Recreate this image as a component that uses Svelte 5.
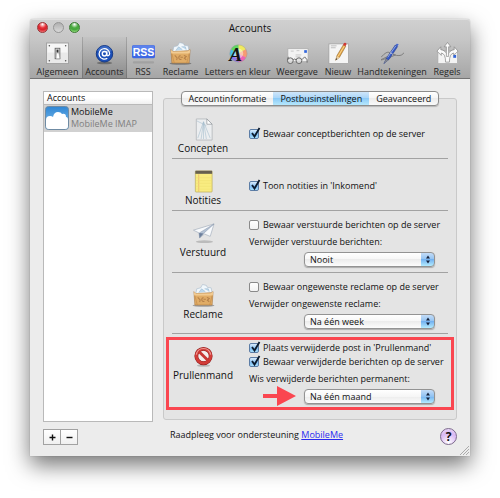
<script>
  const tools = [
    { id: 'general', label: 'Algemeen' },
    { id: 'accounts', label: 'Accounts' },
    { id: 'rss', label: 'RSS' },
    { id: 'junk', label: 'Reclame' },
    { id: 'fonts', label: 'Letters en kleur' },
    { id: 'view', label: 'Weergave' },
    { id: 'compose', label: 'Nieuw' },
    { id: 'signatures', label: 'Handtekeningen' },
    { id: 'rules', label: 'Regels' }
  ]

  const tabs = ['Accountinformatie', 'Postbusinstellingen', 'Geavanceerd']

  const periods = ['Nooit', 'Na één dag', 'Na één week', 'Na één maand']

  let sections = $state([
    {
      id: 'drafts',
      title: 'Concepten',
      checks: [{ text: 'Bewaar conceptberichten op de server', on: true }]
    },
    {
      id: 'notes',
      title: 'Notities',
      checks: [{ text: "Toon notities in 'Inkomend'", on: true }]
    },
    {
      id: 'sent',
      title: 'Verstuurd',
      checks: [{ text: 'Bewaar verstuurde berichten op de server', on: false }],
      erase: 'Verwijder verstuurde berichten:',
      period: 'Nooit'
    },
    {
      id: 'junk',
      title: 'Reclame',
      checks: [{ text: 'Bewaar ongewenste reclame op de server', on: false }],
      erase: 'Verwijder ongewenste reclame:',
      period: 'Na één week'
    },
    {
      id: 'trash',
      title: 'Prullenmand',
      checks: [
        { text: "Plaats verwijderde post in 'Prullenmand'", on: true },
        { text: 'Bewaar verwijderde berichten op de server', on: true }
      ],
      erase: 'Wis verwijderde berichten permanent:',
      period: 'Na één maand',
      marked: true
    }
  ])

  let tool = $state('accounts')
  let tab = $state('Postbusinstellingen')
</script>

{#snippet bag()}
  <svg class="icon" viewBox="0 0 24 24">
    <ellipse cx="12" cy="22.500" rx="11.500" ry="1.200" fill="#000" opacity=".3" />
    <path d="M4 10L5 5l4-1 2-3.500 4 1 1 2 4 .5 1 6z" fill="#f1f7fb" stroke="#a4b8c8" stroke-width=".6" />
    <path d="M7 9l3-4 4 3M13 5l4 0 1 3" fill="#bcd8ec" stroke="#8cacc6" stroke-width=".5" />
    <path d="M2 8l2 2 16-1 2-1-1 14H3z" fill="#e0ac66" stroke="#a8743a" stroke-width=".6" />
    <path d="M2 8l2 2h15l3-2-.3 4H2.300z" fill="#f2cb92" />
    <path d="M3 12l2.500 10M21 12l-2.500 10" stroke="#c48b4a" stroke-width=".7" />
    <path d="M6 14l2.500 2.500L8 19M12 14c-3 1-2 5 1 4M12 16h2.500M15.500 14l2.500 1-2 2 2 1.500" fill="none" stroke="#b58049" stroke-width="1.100" />
  </svg>
{/snippet}

{#snippet toolIcon(id)}
  {#if id === 'general'}
    <svg class="icon" viewBox="0 0 24 24">
      <rect x=".5" y="1" width="23" height="21.500" fill="#e9e9e9" stroke="#a2a2a2" />
      <rect x="1.500" y="2" width="21" height="9" fill="#f6f6f6" />
      <g fill="#555"><circle cx="3.500" cy="4" r=".8" /><circle cx="20.500" cy="4" r=".8" /><circle cx="3.500" cy="19.500" r=".8" /><circle cx="20.500" cy="19.500" r=".8" /></g>
      <rect x="9.500" y="6.500" width="5" height="11" fill="#ddd" stroke="#555" stroke-width=".8" />
      <path d="M11 8h2v3h-2z" fill="#333" />
      <path d="M11 11.500h2.500l1 6h-4z" fill="#fff" stroke="#888" stroke-width=".5" />
    </svg>
  {:else if id === 'accounts'}
    <svg class="icon" viewBox="0 0 24 24">
      <ellipse cx="12" cy="21.800" rx="8" ry="1.500" fill="#000" opacity=".3" />
      <circle cx="12" cy="12.300" r="8.600" fill="#1b4fb8" stroke="#123684" />
      <path d="M4.500 9.300a8 8 0 0 1 15 0q-7 4-15 0z" fill="#6f97dc" opacity=".4" />
      <circle cx="12" cy="12.300" r="2.300" fill="none" stroke="#fff" stroke-width="1.500" />
      <path d="M14.400 9.600v3.500c0 2 3 1.600 3-1a5.500 5.500 0 1 0-2.500 4.900" fill="none" stroke="#fff" stroke-width="1.300" />
    </svg>
  {:else if id === 'rss'}
    <svg class="icon" viewBox="0 0 24 24">
      <rect x="1" y="20" width="22" height="2.500" rx="1" fill="#777" opacity=".3" />
      <rect x="0" y="3.500" width="24" height="13.500" rx="1.500" fill="#3d67e4" />
      <rect x=".5" y="4" width="23" height="6" rx="1" fill="#5b82ee" />
      <text x="12" y="14.500" text-anchor="middle" class="rss">RSS</text>
    </svg>
  {:else if id === 'junk'}
    {@render bag()}
  {:else if id === 'fonts'}
    <svg class="icon" viewBox="0 0 24 24">
      <path d="M13 12V3a9 9 0 0 1 7.800 4.500z" fill="#f0ea5e" />
      <path d="M13 12l7.800-4.500a9 9 0 0 1 0 9z" fill="#f79a72" />
      <path d="M13 12l7.800 4.500A9 9 0 0 1 13 21z" fill="#f062b4" />
      <path d="M13 12v9a9 9 0 0 1-7.800-4.500z" fill="#8a78ea" />
      <path d="M13 12l-7.800 4.500a9 9 0 0 1 0-9z" fill="#47bfe8" />
      <path d="M13 12L5.200 7.500A9 9 0 0 1 13 3z" fill="#5ed860" />
      <circle cx="13" cy="12" r="5" fill="#fff" opacity=".45" />
      <circle cx="13" cy="12" r="9" fill="none" stroke="#999" stroke-width=".5" />
      <text x="10" y="20" text-anchor="middle" class="letter">A</text>
    </svg>
  {:else if id === 'view'}
    <svg class="icon" viewBox="0 0 24 24">
      <rect x="2" y="7" width="21" height="13.500" fill="#f3f3f3" stroke="#aaa" stroke-width=".7" />
      <rect x="19" y="8.500" width="2.800" height="2.800" fill="#3266dc" />
      <path d="M5 9.500h3M11 9h3M10 13.500h6M10 15.500h5" stroke="#bbb" stroke-width=".8" />
      <circle cx="4.500" cy="19.500" r="3" fill="#ddd" fill-opacity=".8" stroke="#666" />
      <circle cx="13.500" cy="19.500" r="3" fill="#ddd" fill-opacity=".8" stroke="#666" />
      <path d="M7.500 18.500q1.500-1.500 3 0M1.500 18.500l1-3M16.500 18.500l3-3 2.500 3v3" fill="none" stroke="#666" />
    </svg>
  {:else if id === 'compose'}
    <svg class="icon" viewBox="0 0 24 24">
      <rect x="2" y="2" width="20.500" height="20.500" fill="#f5f5f5" stroke="#9a9a9a" stroke-width=".7" />
      <path d="M4 4h6M4 6h5" stroke="#bbb" />
      <path d="M9 19l1.500-5L17 3l2.500 1.500-6.500 11.500z" fill="#e6a340" stroke="#8c6428" stroke-width=".6" />
      <path d="M11.500 15l7-11.500" stroke="#f9d792" />
      <path d="M9 19l1.500-4.500 2.500 2z" fill="#e9cfa4" /><path d="M9 19l.6-2 1.200.8z" fill="#222" />
      <path d="M16.700 3.200L17.800 1q1.500-1 2.700 1l-1.300 2.500z" fill="#cf3a34" />
    </svg>
  {:else if id === 'signatures'}
    <svg class="icon" viewBox="0 0 24 24">
      <path d="M0 16q6-7 9-5t-6 6 3 0 8-4 2 1 8-3" fill="none" stroke="#777" stroke-width=".9" />
      <path d="M3 22.500l3-6L15 3l2.500 1.500L8.500 18z" fill="#3558c4" stroke="#223a8c" stroke-width=".6" />
      <path d="M7 16L15.500 4" stroke="#a9bdf0" stroke-width=".8" />
      <path d="M9.500 11l3 2M15 3l1.500-2 2.500 1.500-1.500 2" fill="#4868c8" stroke="#ccc" stroke-width=".8" />
      <path d="M3 22.500l2.500-5 2 1.500z" fill="#888" />
    </svg>
  {:else}
    <svg class="icon" viewBox="0 0 24 24">
      <rect x="2" y="9.500" width="20.500" height="13" fill="#f3f3f3" stroke="#a5a5a5" stroke-width=".7" />
      <rect x="18" y="13.500" width="3" height="3" fill="#3266dc" />
      <g fill="#fafafa" stroke="#808080" stroke-width=".7" stroke-linejoin="round">
        <path d="M10 21q0-9-4.500-9.500V14L1 9.500 5 5v3q5 .5 7 6 2-5.500 7-6V5l4 4.500-4.500 4.500v-2.500Q14 12 14 21z" />
        <path d="M10.800 15V5H8.500L12 .5 15.500 5h-2.300v10z" />
      </g>
    </svg>
  {/if}
{/snippet}

{#snippet sectionIcon(id)}
  {#if id === 'drafts'}
    <svg class="icon" viewBox="0 0 24 24">
      <path d="M4.500 1h11l5.500 5.500V23h-16.500z" fill="#eceef0" stroke="#b0b4b8" stroke-width=".8" />
      <path d="M12 4L6 21M12 4l-2.500 18M12 4v18M12 4l3 18M12 4l7 17M5 3l10 5" stroke="#a4bccd" stroke-width=".6" />
      <path d="M15.500 1v5.500h5.500z" fill="#fff" stroke="#8a9096" stroke-width=".7" />
    </svg>
  {:else if id === 'notes'}
    <svg class="icon" viewBox="0 0 24 24">
      <rect x="3.500" y="1" width="17.500" height="22" rx=".8" fill="#f9ec80" stroke="#b9aa58" stroke-width=".7" />
      <rect x="3.500" y=".8" width="17.500" height="3.200" fill="#67604f" />
      <path d="M7 4.500v18" stroke="#e8a870" stroke-width=".7" />
      <path d="M4 8h16M4 11h16M4 14h16M4 17h16M4 20h16" stroke="#efdf70" stroke-width=".5" />
    </svg>
  {:else if id === 'sent'}
    <svg class="icon" viewBox="0 0 24 24">
      <ellipse cx="13" cy="20.500" rx="9" ry="1.500" fill="#000" opacity=".18" />
      <path d="M1.500 8.500L23 2l-4 13-6-2.500-5 4-.5-5z" fill="#f8fafc" stroke="#a4aebb" stroke-width=".7" />
      <path d="M7.500 11.500L23 2 12 12l-4 4.500z" fill="#b4c2d4" stroke="#8594a8" stroke-width=".5" />
      <path d="M12 12l-4 4.500-.5-5z" fill="#6c7f9c" />
    </svg>
  {:else if id === 'junk'}
    {@render bag()}
  {:else}
    <svg class="icon" viewBox="0 0 24 24">
      <ellipse cx="12" cy="21.500" rx="7" ry="1.300" fill="#000" opacity=".2" />
      <circle cx="12" cy="11.500" r="7.500" fill="#f4eceb" stroke="#8e1d1d" stroke-width="4" />
      <circle cx="12" cy="11.500" r="7.500" fill="none" stroke="#d23c38" stroke-width="3" />
      <path d="M6.700 6.200l10.600 10.600" stroke="#c93532" stroke-width="3" />
      <path d="M4.500 10a7.600 7.600 0 0 1 15 0" fill="none" stroke="#f09a94" stroke-width="1.200" />
    </svg>
  {/if}
{/snippet}

<main>
  <div class="window">
    <header>
      <div class="titlebar">
        <div class="lights">
          <button class="light red" aria-label="Sluit"></button>
          <button class="light gray" aria-label="Minimaliseer"></button>
          <button class="light green" aria-label="Zoom"></button>
        </div>
        <h1>Accounts</h1>
      </div>
      <nav class="toolbar">
        {#each tools as t (t.id)}
          <button class="tool" class:selected={tool === t.id} onclick={() => (tool = t.id)}>
            {@render toolIcon(t.id)}
            <span>{t.label}</span>
          </button>
        {/each}
      </nav>
    </header>

    <div class="content">
      <aside>
        <div class="list">
          <h2>Accounts</h2>
          <button class="account">
            <svg class="cloud" viewBox="0 0 24 24">
              <defs>
                <linearGradient id="sky" x1="0" y1="0" x2="0" y2="1">
                  <stop offset="0" stop-color="#2f86d4" />
                  <stop offset="1" stop-color="#8cc6ee" />
                </linearGradient>
              </defs>
              <rect x=".5" y=".5" width="23" height="23" rx="3" fill="url(#sky)" stroke="#6f8ba3" />
              <path d="M1 14q0-4 4-4 2 0 3 1 1-5 5-5 3 0 4 2 4-1 4 3 2 0 2 3v6q0 3-3 3H4q-3 0-3-3z" fill="#fff" />
            </svg>
            <span class="names">
              <span>MobileMe</span>
              <span class="kind">MobileMe IMAP</span>
            </span>
          </button>
        </div>
        <div class="edit">
          <button aria-label="Voeg toe"><svg viewBox="0 0 7 7"><path d="M3.500 0.500v6M0.500 3.500h6" /></svg></button>
          <button aria-label="Verwijder"><svg viewBox="0 0 7 7"><path d="M0.500 3.500h6" /></svg></button>
        </div>
      </aside>

      <div class="settings">
        <div class="tabs">
          {#each tabs as name}
            <button class:active={tab === name} onclick={() => (tab = name)}>{name}</button>
          {/each}
        </div>
        <div class="panel">
          {#each sections as s (s.id)}
            <section class={s.id} class:marked={s.marked}>
              <div class="heading">
                {@render sectionIcon(s.id)}
                <h3>{s.title}</h3>
              </div>
              <div class="options" class:single={!s.erase}>
                <div class="checks">
                  {#each s.checks as check}
                    <label class="check">
                      <input type="checkbox" bind:checked={check.on} />
                      <svg class="tick" viewBox="0 0 12 12"><path d="M3 6l2.500 3.500L10.500 1" /></svg>
                      {check.text}
                    </label>
                  {/each}
                </div>
                {#if s.erase}
                  <label for="period-{s.id}">{s.erase}</label>
                  <div class="popup">
                    <select id="period-{s.id}" bind:value={s.period}>
                      {#each periods as p}
                        <option>{p}</option>
                      {/each}
                    </select>
                    <svg class="arrows" viewBox="0 0 14 15"><path d="M5 6.500L7 3.500l2 3zM5 8.500l2 3 2-3z" /></svg>
                  </div>
                {/if}
              </div>
              {#if s.marked}
                <svg class="pointer" viewBox="0 0 33 20"><path d="M0 8h14V0l19 10-19 10v-8H0z" /></svg>
              {/if}
            </section>
          {/each}
        </div>
        <footer>
          <p>Raadpleeg voor ondersteuning <a href="#mobileme">MobileMe</a></p>
          <button class="help">?</button>
        </footer>
      </div>
    </div>
    <svg class="grip" viewBox="0 0 9 9"><path d="M0 9l9-9M3 9l6-6M6 9l3-3" /></svg>
  </div>
</main>

<style>
  :global(body) {
    background: #fff;
  }

  main {
    padding: 19px 30px 42px;
    overflow: hidden;
    font: 9px/13px "Open Sans", "Noto Sans", sans-serif;
    color: #111;
  }

  h1, h2, h3, p {
    margin: 0;
    font-weight: 400;
  }

  button, select {
    margin: 0;
    padding: 0;
    border: 0;
    background: none;
    font: inherit;
    color: inherit;
  }

  svg {
    display: block;
  }

  .window {
    position: relative;
    border-radius: 3px 3px 0 0;
    background: #ececec;
    box-shadow: 0 0 1px rgba(0, 0, 0, .4), 0 9px 22px rgba(0, 0, 0, .55);
  }

  header {
    border-bottom: 1px solid #747474;
    border-radius: 3px 3px 0 0;
    background: linear-gradient(#d0d0d0, #c6c6c6 35%, #a6a6a6);
    box-shadow: inset 0 1px #e0e0e0;
  }

  .titlebar {
    position: relative;
    height: 18px;
  }

  .titlebar h1 {
    font-size: 10px;
    line-height: 18px;
    text-align: center;
  }

  .lights {
    position: absolute;
    top: 3px;
    left: 7px;
    display: flex;
    gap: 5px;
  }

  .light {
    width: 11px;
    height: 11px;
    border: 1px solid #959595;
    border-radius: 50%;
  }

  .red {
    border-color: #9a3436;
    background: radial-gradient(circle at 50% 15%, #fff, #e8323a 40%, #d6202a 60%, #ff9a98);
  }

  .gray {
    background: linear-gradient(#b0b0b0, #d8d8d8);
  }

  .green {
    border-color: #3c7a33;
    background: radial-gradient(circle at 50% 15%, #fff, #4cab40 40%, #45a83b 60%, #b8f59a);
  }

  .toolbar {
    display: grid;
    grid-template-columns: 49fr 45fr 32fr 43fr 71fr 48fr 34fr 74fr 36fr;
    padding: 0 5px 0 3px;
  }

  .tool {
    display: flex;
    flex-direction: column;
    align-items: center;
    min-width: 0;
    padding: 5px 0 0;
    color: #262626;
    white-space: nowrap;
  }

  .tool.selected {
    background: linear-gradient(rgba(0, 0, 0, .02), rgba(0, 0, 0, .16));
    box-shadow: inset 1px 0 rgba(0, 0, 0, .15), inset -1px 0 rgba(0, 0, 0, .15);
  }

  .icon {
    width: 23px;
    height: 23px;
  }

  .rss {
    font: bold 11px "Liberation Sans", sans-serif;
    fill: #fff;
  }

  .letter {
    font: italic bold 20px "Liberation Serif", serif;
    fill: #111;
  }

  .content {
    display: flex;
    gap: 10px;
    padding: 12px 13px 11px;
  }

  aside {
    display: flex;
    flex: 0 0 110px;
    flex-direction: column;
    gap: 7px;
  }

  .list {
    flex: 1;
    border: 1px solid #b9b9b9;
    background: #fff;
  }

  .list h2 {
    padding-left: 3px;
    border-bottom: 1px solid #b9b9b9;
    background: linear-gradient(#fff 50%, #f0f0f0);
    font-size: 9px;
    line-height: 12px;
  }

  .account {
    display: flex;
    gap: 2px;
    width: 100%;
    padding: 1px 1px 2px;
    background: #d1d1d1;
    text-align: left;
  }

  .cloud {
    width: 24px;
    height: 24px;
  }

  .names {
    display: flex;
    flex-direction: column;
    line-height: 12px;
  }

  .kind {
    color: #808080;
  }

  .edit {
    display: flex;
  }

  .edit button {
    display: grid;
    place-items: center;
    width: 18px;
    height: 16px;
    border: 1px solid #a2a2a2;
    background: linear-gradient(#fff, #f0f0f0);
  }

  .edit button + button {
    margin-left: -1px;
  }

  .edit svg {
    width: 7px;
    height: 7px;
    stroke: #111;
    stroke-width: 1.400;
  }

  .settings {
    display: flex;
    flex: 1;
    flex-direction: column;
    min-width: 0;
  }

  .tabs {
    z-index: 1;
    display: flex;
    align-self: center;
    overflow: hidden;
    border: 1px solid #8c8c8c;
    border-radius: 4px;
    background: linear-gradient(#fff, #f4f4f4 50%, #ececec 50%, #fafafa);
    box-shadow: 0 1px 1px rgba(0, 0, 0, .2);
  }

  .tabs button {
    padding: 0 7px;
    line-height: 13px;
  }

  .tabs .active {
    background: linear-gradient(#cfe6fa, #a6d4f8 50%, #8ccaf7 50%, #b6e8fd);
  }

  .panel {
    margin-top: -8px;
    padding: 8px 8px 9px;
    border: 1px solid #c9c9c9;
    border-radius: 3px;
    background: #e4e4e4;
  }

  section {
    position: relative;
    display: grid;
    grid-template-columns: 62px 1fr;
    gap: 15px;
    min-height: 51px;
    border-bottom: 1px solid #a2a2a2;
  }

  section.sent {
    min-height: 61px;
  }

  section.junk {
    min-height: 60px;
  }

  section.trash {
    min-height: 76px;
    border-bottom: 0;
  }

  .heading {
    display: flex;
    flex-direction: column;
    align-items: center;
    padding-top: 11px;
  }

  h3 {
    font-size: 10px;
    line-height: 15px;
  }

  .options {
    display: flex;
    flex-direction: column;
    gap: 4px;
    padding-top: 7px;
    white-space: nowrap;
  }

  .options.single {
    padding-top: 20px;
  }

  .checks {
    display: flex;
    flex-direction: column;
    gap: 1px;
  }

  .check {
    position: relative;
    display: flex;
    gap: 4px;
    align-items: center;
  }

  .check input {
    appearance: none;
    width: 10px;
    height: 10px;
    margin: 0;
    border: 1px solid #8a8a8a;
    border-radius: 2px;
    background: linear-gradient(#fff, #f3f3f3);
  }

  .check input:checked {
    border-color: #5c7da6;
    background: linear-gradient(#d9ebfb, #7fbdf2 60%, #a9e0fc);
  }

  .tick {
    position: absolute;
    top: 0;
    left: 0;
    display: none;
    width: 12px;
    height: 12px;
    fill: none;
    stroke: #0b1a2c;
    stroke-width: 1.800;
    pointer-events: none;
  }

  input:checked + .tick {
    display: block;
  }

  .popup {
    position: relative;
    width: 131px;
    margin-left: 55px;
  }

  select {
    appearance: none;
    display: block;
    box-sizing: border-box;
    width: 100%;
    height: 15px;
    padding-left: 5px;
    border: 1px solid #939393;
    border-radius: 4px;
    background:
      linear-gradient(#c4dcf7, #90c2f2 50%, #74b2f0 50%, #b4ecff) right / 13px 100% no-repeat,
      linear-gradient(#fff, #f6f6f6 50%, #ececec 50%, #fcfcfc);
    box-shadow: 0 1px 1px rgba(0, 0, 0, .25);
    line-height: 13px;
  }

  .arrows {
    position: absolute;
    top: 0;
    right: 0;
    width: 14px;
    height: 15px;
    fill: #14203a;
    pointer-events: none;
  }

  .marked::after {
    content: '';
    position: absolute;
    inset: 3px -6px 0;
    border: 3px solid #fa4650;
    pointer-events: none;
  }

  .pointer {
    position: absolute;
    bottom: 4px;
    left: 91px;
    width: 33px;
    height: 20px;
    fill: #fa4650;
  }

  footer {
    display: flex;
    align-items: flex-start;
    justify-content: space-between;
    padding: 8px 0 0 7px;
  }

  a {
    color: #2a2af0;
  }

  .help {
    width: 17px;
    height: 17px;
    border: 1px solid #7d6a8c;
    border-radius: 50%;
    background: radial-gradient(circle at 50% 90%, #fff, #d9b8f4 60%, #efe2fa);
    font-size: 12px;
    font-weight: 700;
    line-height: 15px;
  }

  .grip {
    position: absolute;
    right: 1px;
    bottom: 1px;
    width: 9px;
    height: 9px;
    stroke: #9a9a9a;
    stroke-width: .8;
  }
</style>
